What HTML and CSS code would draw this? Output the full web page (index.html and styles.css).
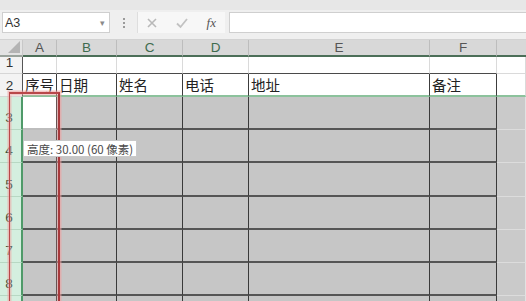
FILE: index.html
```html
<!DOCTYPE html>
<html>
<head>
<meta charset="utf-8">
<link rel="stylesheet" href="styles.css">
</head>
<body>
<div class="app">
  <div class="fbar">
    <div class="namebox"><span class="nm">A3</span><span class="dd">▾</span></div>
    <div class="grip"><i></i><i></i><i></i></div>
    <div class="icons">
      <svg class="ic" width="12" height="12" viewBox="0 0 12 12"><path d="M2 2L10 10M10 2L2 10" stroke="#b9b9b9" stroke-width="1.6" fill="none"/></svg>
      <svg class="ic" width="14" height="12" viewBox="0 0 14 12"><path d="M2 6.5L5.5 10L12 2" stroke="#c2c2c2" stroke-width="1.8" fill="none"/></svg>
      <span class="fx">fx</span>
    </div>
    <div class="input"></div>
  </div>
  <div class="sheet">
    <div class="corner"><svg width="12" height="12" viewBox="0 0 12 12"><path d="M12 0L12 12L0 12Z" fill="#b4b4b4"/></svg></div>
    <div class="ch">A</div><div class="ch g">B</div><div class="ch g">C</div><div class="ch g">D</div><div class="ch">E</div><div class="ch">F</div><div class="ch last"></div>

    <div class="rh">1</div>
    <div class="c tb"></div><div class="c tb"></div><div class="c tb"></div><div class="c tb"></div><div class="c tb"></div><div class="c tb"></div><div class="c"></div>

    <div class="rh">2</div>
    <div class="c t2 first">序号</div><div class="c t2">日期</div><div class="c t2">姓名</div><div class="c t2">电话</div><div class="c t2">地址</div><div class="c t2">备注</div><div class="c g2"></div>

    <div class="rh sel">3</div>
    <div class="c s active"></div><div class="c s"></div><div class="c s"></div><div class="c s"></div><div class="c s"></div><div class="c s"></div><div class="c sg"></div>

    <div class="rh sel">4</div>
    <div class="c s"></div><div class="c s"></div><div class="c s"></div><div class="c s"></div><div class="c s"></div><div class="c s"></div><div class="c sg"></div>

    <div class="rh sel">5</div>
    <div class="c s"></div><div class="c s"></div><div class="c s"></div><div class="c s"></div><div class="c s"></div><div class="c s"></div><div class="c sg"></div>

    <div class="rh sel">6</div>
    <div class="c s"></div><div class="c s"></div><div class="c s"></div><div class="c s"></div><div class="c s"></div><div class="c s"></div><div class="c sg"></div>

    <div class="rh sel">7</div>
    <div class="c s"></div><div class="c s"></div><div class="c s"></div><div class="c s"></div><div class="c s"></div><div class="c s"></div><div class="c sg"></div>

    <div class="rh sel">8</div>
    <div class="c s"></div><div class="c s"></div><div class="c s"></div><div class="c s"></div><div class="c s"></div><div class="c s"></div><div class="c sg"></div>

    <div class="rh sel"></div>
    <div class="c s"></div><div class="c s"></div><div class="c s"></div><div class="c s"></div><div class="c s"></div><div class="c s"></div><div class="c sg"></div>

    <div class="redbox"></div>
    <div class="tip">高度: 30.00 (60 像素)</div>
  </div>
</div>
</body>
</html>
```
FILE: styles.css
```css
html, body { margin: 0; padding: 0; }
body {
  width: 526px; height: 301px; overflow: hidden;
  background: #ffffff;
  font-family: "Liberation Sans", "Noto Sans CJK SC", sans-serif;
}
.app { width: 526px; height: 301px; overflow: hidden; }

.fbar {
  height: 40px; box-sizing: border-box;
  background: #efefef;
  border-top: 10px solid #e7e7e7;
  border-bottom: 1px solid #d2d2d2;
  display: flex; align-items: flex-start;
  padding-top: 2px;
}
.namebox {
  margin-left: 2px; width: 108px; height: 21px; box-sizing: border-box;
  background: #fff; border: 1px solid #cfcfcf;
  display: flex; align-items: center; justify-content: space-between;
  padding: 0 4px 0 2px;
  font-size: 12.5px; color: #333;
}
.dd { font-size: 9px; color: #8a8a8a; }
.grip {
  width: 27px; height: 21px;
  display: flex; flex-direction: column; align-items: center; justify-content: center; gap: 2px;
}
.grip i { display: block; width: 2px; height: 2px; background: #9a9a9a; }
.icons {
  width: 88px; height: 21px; box-sizing: border-box;
  background: #f7f7f7;
  border-left: 1px solid #dedede;
  display: flex; align-items: center; justify-content: space-between;
  padding: 0 9px 0 8px;
}
.fx { font-family: "Liberation Serif", serif; font-style: italic; font-size: 13px; color: #555; }
.input {
  flex: 1; height: 21px; margin-left: 4px;
  background: #fff; border: 1px solid #cfcfcf; border-right: 0; box-sizing: border-box;
}

.sheet {
  position: relative;
  display: grid;
  grid-template-columns: 23px 34px 60px 66px 66px 181px 67px 1fr;
  grid-template-rows: 17px 17px 23px 33px 33px 34px 33px 33px 33px 33px;
}
.corner {
  background: #e3e3e3; box-sizing: border-box;
  border-right: 1px solid #c8c8c8; border-bottom: 2px solid #9aa39c;
  display: flex; align-items: flex-end; justify-content: flex-end; padding: 0 2px 2px 0;
}
.ch {
  background: #d8d8d8; box-sizing: border-box;
  border-right: 1px solid #bdbdbd; border-bottom: 2px solid #4c6f58;
  font-size: 13.5px; color: #555;
  display: flex; align-items: center; justify-content: center;
}
.ch.g { color: #3e6b4e; }
.ch.last { border-right: 0; }

.rh {
  background: #f3f3f3; box-sizing: border-box;
  border-right: 1px solid #555; border-bottom: 1px solid #d6d6d6;
  font-size: 13.5px; color: #333;
  display: flex; align-items: flex-end; justify-content: center;
  padding: 0 3px 3px 0;
}
.rh.sel {
  background: #d4efdf; color: #35543f;
  border-right: 2px solid #4f9a69; border-bottom: 1px solid #b7d8c3;
  padding-bottom: 4px;
}

.c {
  box-sizing: border-box; background: #fff;
  border-right: 1px solid #dadada; border-bottom: 1px solid #dadada;
  font-family: "Noto Sans CJK SC", sans-serif; font-size: 14.5px; color: #222;
  display: flex; align-items: flex-end; padding: 0 0 1px 2px;
  line-height: 18px;
}
.c.tb { border-bottom: 1px solid #4a4a4a; }
.c.t2 { border-right: 1px solid #3c3c3c; border-bottom: 2px solid #8cc29c; }
.c.g2 { border-bottom: 2px solid #8cc29c; }
.c.s { background: #c6c6c6; border-right: 1px solid #3a3a3a; border-bottom: 2px solid #555; }
.c.sg { background: #cacaca; border-right: 1px solid #e2e2e2; border-bottom: 1px solid #dcdcdc; }
.c.active { background: #fff; border-bottom-color: #bdbdbd; }

.redbox {
  position: absolute; left: 9px; top: 52px; width: 48px; height: 240px;
  border-left: 1.5px solid #b9474a; border-top: 2px solid #b9474a; border-right: 2.5px solid #a8393c;
  box-shadow: 0 0 0 1.5px rgba(240, 160, 160, 0.6), inset 0 0 0 1.5px rgba(240, 160, 160, 0.5);
  pointer-events: none;
}
.tip {
  position: absolute; left: 23px; top: 100px;
  background: #fff; border: 1px solid #c9c9c9;
  font-family: "Noto Sans CJK SC", sans-serif; font-size: 11.5px; color: #4a4a4a;
  padding: 0 3px; height: 17px; line-height: 16px; box-sizing: border-box;
  white-space: nowrap;
}
```
